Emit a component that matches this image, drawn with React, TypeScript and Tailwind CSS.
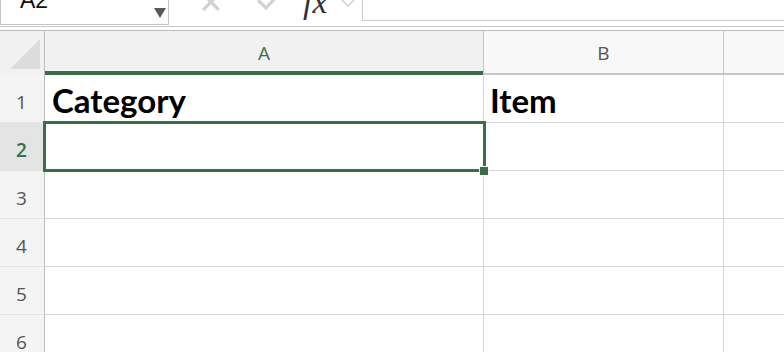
import React from "react";

const rows = [1, 2, 3, 4, 5, 6];

function Toolbar() {
  return (
    <div className="flex h-[27px] border-b border-[#c8c8c8] bg-white">
      {/* name box */}
      <div className="relative h-[25px] w-[169px] overflow-hidden border-b border-l border-r border-[#c4c4c4] bg-white">
        <span className="absolute left-[19px] top-[-12px] text-[23px] leading-[24px] text-[#111]">A2</span>
        <svg className="absolute left-[153px] top-[8px]" width="12" height="10" viewBox="0 0 12 10">
          <path d="M0 0h12L6 10z" fill="#5a5a5a" />
        </svg>
      </div>
      <div className="relative flex-1">
        {/* cancel */}
        <svg className="absolute left-[31px] top-[-9px]" width="22" height="22" viewBox="0 0 22 22">
          <path d="M3 3l16 16M19 3L3 19" stroke="#d2d2d2" strokeWidth="3.2" />
        </svg>
        {/* enter */}
        <svg className="absolute left-[87px] top-[-9px]" width="26" height="22" viewBox="0 0 26 22">
          <path d="M2 9l8 8L24 2" stroke="#d2d2d2" strokeWidth="3.2" fill="none" />
        </svg>
        <span className="absolute left-[134px] top-[-15px] font-['Liberation_Serif',serif] text-[34px] italic leading-[34px] text-[#333]">
          fx
        </span>
        <svg className="absolute left-[172px] top-[-2px]" width="14" height="10" viewBox="0 0 14 10">
          <path d="M1 2l6 6 6-6" stroke="#cfcfcf" strokeWidth="1.4" fill="none" />
        </svg>
        {/* formula input */}
        <div className="absolute left-[193px] right-0 top-0 h-[21px] border-b border-l border-[#cdcdcd]" />
      </div>
    </div>
  );
}

export default function App() {
  return (
    <div className="h-[352px] w-[784px] overflow-hidden bg-white font-['Liberation_Sans',Arial,sans-serif]">
      <Toolbar />
      <div className="h-[4px] border-b border-[#bcbcbc] bg-white" />
      {/* column headers */}
      <div className="flex h-[44px] bg-[#f1f1f1] text-[19px]">
        <div className="relative w-[45px] border-r border-[#bdbdbd]">
          <svg className="absolute left-[10px] top-[8px]" width="30" height="30" viewBox="0 0 30 30">
            <path d="M30 0v30H0z" fill="#dcdcdc" />
          </svg>
        </div>
        <div className="flex w-[438px] items-center justify-center border-b-[4px] border-[#3a6e47] pt-[4px] font-['Open_Sans',sans-serif] text-[#3a6e47]">
          A
        </div>
        <div className="flex w-[240px] items-center justify-center border-b-[2px] border-l border-[#c6c6c6] bg-[#f8f8f8] pt-[2px] font-['Open_Sans',sans-serif] text-[#555]">
          B
        </div>
        <div className="flex-1 border-b-[2px] border-l border-[#c6c6c6] bg-[#f8f8f8]" />
      </div>
      {rows.map((r) => (
        <div key={r} className="flex h-[48px]">
          <div
            className={`flex w-[45px] items-center justify-center border-b border-r border-b-[#e6e6e6] border-r-[#bdbdbd] pr-[1px] font-['Open_Sans',sans-serif] text-[19px] ${
              r === 2 ? "bg-[#e4e4e4] font-semibold text-[#3a6e47]" : "bg-[#f4f4f4] text-[#555]"
            }`}
          >
            <span className="pt-[8px]">{r}</span>
          </div>
          <div className="relative flex w-[438px] items-center border-b border-[#d6d6d6] pl-[7px]">
            {r === 1 && (
              <span className="pt-[4px] font-['Lato',sans-serif] text-[33px] font-bold leading-none text-black">Category</span>
            )}
            {r === 2 && (
              <>
                <div className="absolute -left-[2px] -right-[3px] -top-[2px] -bottom-[2px] border-[3px] border-[#3a6e47]" />
                <div className="absolute -bottom-[6px] -right-[6px] h-[10px] w-[10px] border border-white bg-[#3a6e47]" />
              </>
            )}
          </div>
          <div className="flex w-[240px] items-center border-b border-l border-[#d6d6d6] pl-[6px]">
            {r === 1 && (
              <span className="pt-[4px] font-['Lato',sans-serif] text-[33px] font-bold leading-none text-black">Item</span>
            )}
          </div>
          <div className="flex-1 border-b border-l border-[#d6d6d6]" />
        </div>
      ))}
    </div>
  );
}
